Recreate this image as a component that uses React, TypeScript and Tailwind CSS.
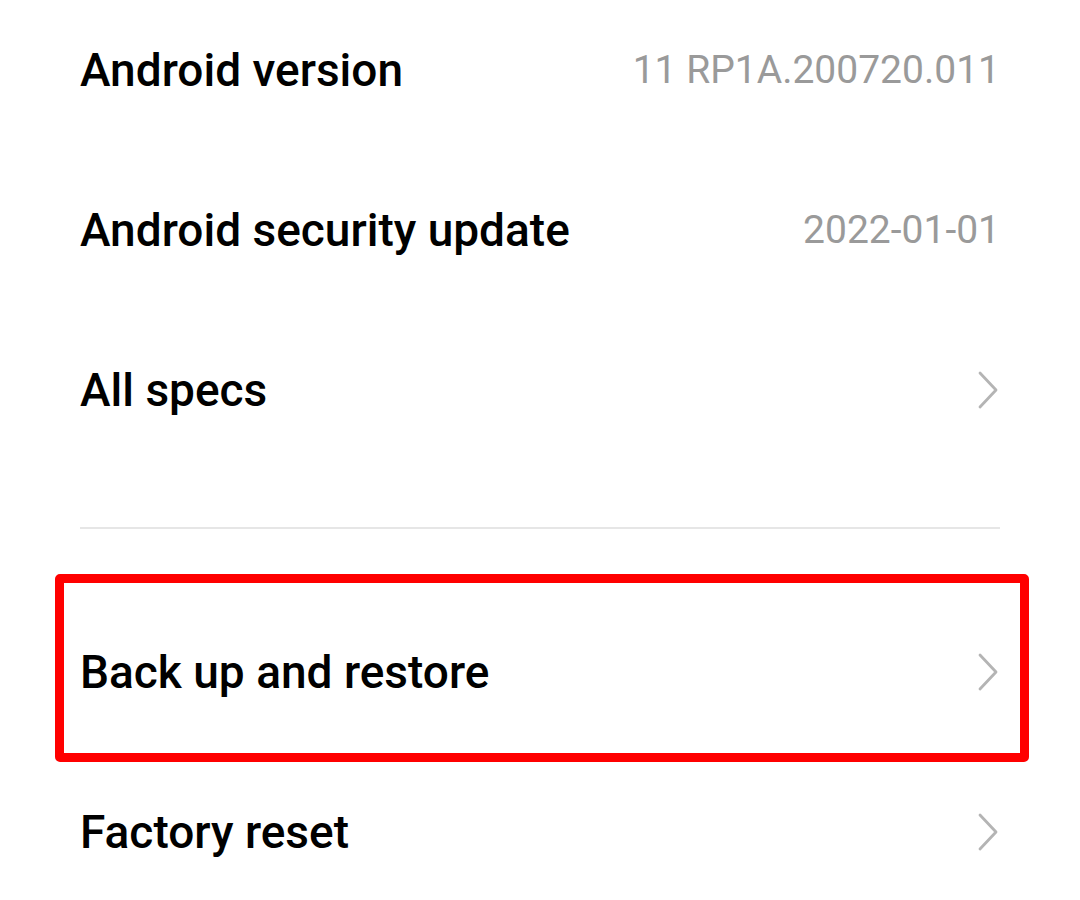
type Row = {
  title: string;
  value?: string;
  arrow?: boolean;
};

const topRows: Row[] = [
  { title: "Android version", value: "11 RP1A.200720.011" },
  { title: "Android security update", value: "2022-01-01" },
  { title: "All specs", arrow: true },
];

function Chevron() {
  return (
    <svg width="22" height="38" viewBox="0 0 22 38" fill="none" className="mr-[1px] shrink-0">
      <polyline
        points="3,2 19,19 3,36"
        stroke="#b4b4b4"
        strokeWidth="2.8"
        strokeLinecap="round"
        strokeLinejoin="round"
      />
    </svg>
  );
}

function SettingRow({ row }: { row: Row }) {
  return (
    <div className="flex h-[160px] items-center justify-between">
      <span className="text-[46px] font-medium text-black">{row.title}</span>
      {row.value && <span className="text-[39px] text-[#9a9a9a]">{row.value}</span>}
      {row.arrow && <Chevron />}
    </div>
  );
}

export default function App() {
  return (
    <div
      className="h-[900px] w-[1080px] overflow-hidden bg-white px-[80px]"
      style={{ fontFamily: "Roboto, 'Liberation Sans', sans-serif" }}
    >
      <div className="-mt-[10px]">
        {topRows.map((row) => (
          <SettingRow key={row.title} row={row} />
        ))}
      </div>

      <div className="mt-[57px] h-[2px] bg-[#e6e6e6]" />

      <div className="relative mt-[63px]">
        <div className="pointer-events-none absolute -left-[25px] -right-[29px] -top-[18px] -bottom-[10px] rounded-[5px] border-[9px] border-[#ff0000]" />
        <SettingRow row={{ title: "Back up and restore", arrow: true }} />
      </div>
      <SettingRow row={{ title: "Factory reset", arrow: true }} />
    </div>
  );
}
